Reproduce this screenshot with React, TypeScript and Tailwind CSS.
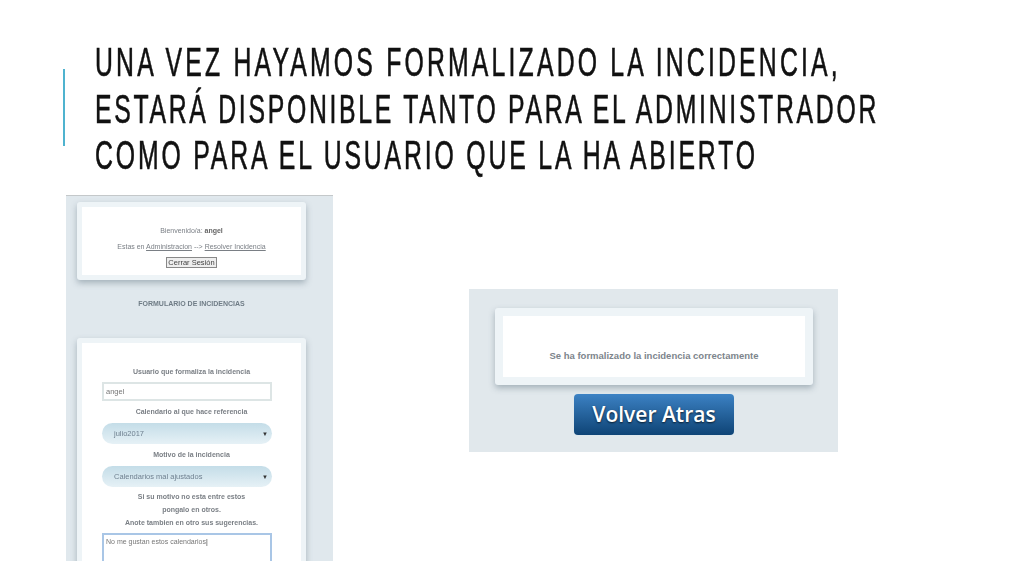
export default function App() {
  const sans = "font-['Liberation_Sans',Arial,sans-serif]";
  return (
    <div className={`w-[1024px] h-[576px] bg-white overflow-hidden flex flex-col ${sans}`}>
      <header className="flex h-[195px] pl-[63px] shrink-0">
        <div className="w-[2px] h-[77px] mt-[69px] shrink-0 bg-[#4fb3cf]" />
        <h1 className="ml-[30px] mt-[39px] text-[40px] leading-[46.5px] tracking-[4.36px] text-[#111] font-normal [-webkit-text-stroke:0.6px_#111] whitespace-nowrap origin-top-left scale-x-[0.62]">
          <div className="tracking-[5.13px]">UNA VEZ HAYAMOS FORMALIZADO LA INCIDENCIA,</div>
          <div>ESTARÁ DISPONIBLE TANTO PARA EL ADMINISTRADOR</div>
          <div className="tracking-[4.6px]">COMO PARA EL USUARIO QUE LA HA ABIERTO</div>
        </h1>
      </header>
      <main className="flex pl-[66px] items-start">
        <section className="w-[267px] h-[366px] overflow-hidden bg-[#e0e8ed] border-t border-[#c4c8ca] pt-[6px] pl-[11px] text-[#7a7f85] blur-[0.3px]">
          <div className="w-[229px] h-[78px] bg-[#eef4f7] rounded-[3px] p-[5px] shadow-[0_3px_6px_rgba(90,110,125,0.45)]">
            <div className="h-full bg-white flex flex-col items-center pt-[19px] text-[7px] leading-[10px]">
              <div>Bienvenido/a: <b className="font-bold text-[#666]">angel</b></div>
              <div className="mt-[6px]">Estas en <u>Administracion</u> --&gt; <u>Resolver Incidencia</u></div>
              <div className="mt-[5px] h-[11px] w-[51px] flex items-center justify-center border border-[#888] bg-[#eee] text-[#444] text-[7.5px]">Cerrar Sesión</div>
            </div>
          </div>
          <div className="w-[229px] mt-[19px] text-center text-[7px] leading-[10px] font-bold text-[#6f7c86]">FORMULARIO DE INCIDENCIAS</div>
          <div className="w-[229px] h-[300px] mt-[29px] bg-[#eef4f7] rounded-[3px] p-[5px] shadow-[0_3px_6px_rgba(90,110,125,0.45)]">
            <div className="h-full bg-white flex flex-col items-center pt-[24px] text-[7px] leading-[10px] font-bold">
              <div>Usuario que formaliza la incidencia</div>
              <div className="self-start ml-[20px] w-[170px] h-[19px] mt-[5px] border-2 border-[#dde5e5] pl-[2px] flex items-center font-normal text-[7.5px] text-[#777]">angel</div>
              <div className="mt-[6px]">Calendario al que hace referencia</div>
              <div className="self-start ml-[20px] w-[170px] h-[21px] mt-[6px] rounded-full bg-gradient-to-b from-[#c4dde8] to-[#e6f1f6] flex items-center justify-between pl-[12px] pr-[4px] font-normal text-[7.5px] text-[#6f8090]">
                <span>julio2017</span><span className="text-[6px] text-[#333]">▼</span>
              </div>
              <div className="mt-[6px]">Motivo de la incidencia</div>
              <div className="self-start ml-[20px] w-[170px] h-[21px] mt-[6px] rounded-full bg-gradient-to-b from-[#c4dde8] to-[#e6f1f6] flex items-center justify-between pl-[12px] pr-[4px] font-normal text-[7.5px] text-[#6f8090]">
                <span>Calendarios mal ajustados</span><span className="text-[6px] text-[#333]">▼</span>
              </div>
              <div className="mt-[3px] text-center leading-[13px]">
                <div>Si su motivo no esta entre estos</div>
                <div>pongalo en otros.</div>
                <div>Anote tambien en otro sus sugerencias.</div>
              </div>
              <div className="self-start ml-[20px] w-[170px] h-[60px] mt-[4px] border-2 border-[#a9c6e6] pl-[2px] pt-[2px] font-normal text-[#777] text-left">
                No me gustan estos calendarios<span className="text-[#333]">|</span>
              </div>
            </div>
          </div>
        </section>
        <section className="w-[369px] h-[163px] ml-[136px] mt-[94px] bg-[#e1e8ec] pt-[19px] pl-[26px] flex flex-col items-start">
          <div className="w-[318px] h-[77px] bg-[#eef4f7] rounded-[3px] p-[8px] shadow-[0_3px_6px_rgba(90,110,125,0.45)]">
            <div className="h-full bg-white flex items-end justify-center pb-[15px] text-[9.5px] leading-[12px] font-bold text-[#7d858c]">
              Se ha formalizado la incidencia correctamente
            </div>
          </div>
          <div className="w-[160px] h-[41px] mt-[9px] ml-[79px] rounded-[4px] bg-gradient-to-b from-[#3c82c4] to-[#0e4476] flex items-center justify-center text-white font-['Open_Sans',sans-serif] font-semibold text-[21px] [text-shadow:0_1px_2px_rgba(0,0,0,0.7)] shadow-[0_0_1px_#bfe0f0]">
            Volver Atras
          </div>
        </section>
      </main>
    </div>
  );
}
